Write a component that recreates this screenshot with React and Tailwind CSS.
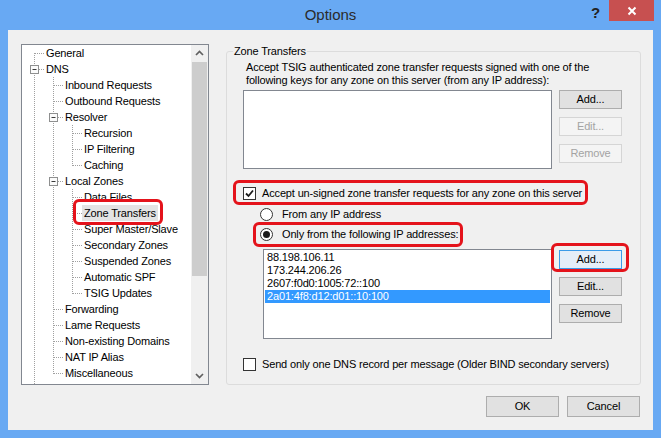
import React from "react";

const tree = [
  { label: "General", guides: [], conn: "F" },
  { label: "DNS", guides: [], conn: "T", box: true },
  { label: "Inbound Requests", guides: ["I"], conn: "T" },
  { label: "Outbound Requests", guides: ["I"], conn: "T" },
  { label: "Resolver", guides: ["I"], conn: "T", box: true },
  { label: "Recursion", guides: ["I", "I"], conn: "T" },
  { label: "IP Filtering", guides: ["I", "I"], conn: "T" },
  { label: "Caching", guides: ["I", "I"], conn: "L" },
  { label: "Local Zones", guides: ["I"], conn: "T", box: true },
  { label: "Data Files", guides: ["I", "I"], conn: "T" },
  { label: "Zone Transfers", guides: ["I", "I"], conn: "T", selected: true },
  { label: "Super Master/Slave", guides: ["I", "I"], conn: "T" },
  { label: "Secondary Zones", guides: ["I", "I"], conn: "T" },
  { label: "Suspended Zones", guides: ["I", "I"], conn: "T" },
  { label: "Automatic SPF", guides: ["I", "I"], conn: "T" },
  { label: "TSIG Updates", guides: ["I", "I"], conn: "L" },
  { label: "Forwarding", guides: ["I"], conn: "T" },
  { label: "Lame Requests", guides: ["I"], conn: "T" },
  { label: "Non-existing Domains", guides: ["I"], conn: "T" },
  { label: "NAT IP Alias", guides: ["I"], conn: "T" },
  { label: "Miscellaneous", guides: ["I"], conn: "L" },
  { label: "", guides: ["I"], conn: null },
];

const addresses = ["88.198.106.11", "173.244.206.26", "2607:f0d0:1005:72::100", "2a01:4f8:d12:d01::10:100"];

function Guide({ kind, box }) {
  const dot = { stroke: "#a0a0a0", strokeWidth: 1, strokeDasharray: "1 1" };
  return (
    <svg width="19" height="16" className="shrink-0">
      {(kind === "I" || kind === "T") && <line x1="9.5" y1="0" x2="9.5" y2="16" {...dot} />}
      {kind === "L" && <line x1="9.5" y1="0" x2="9.5" y2="9" {...dot} />}
      {kind === "F" && <line x1="9.5" y1="8" x2="9.5" y2="16" {...dot} />}
      {(kind === "T" || kind === "L" || kind === "F") && <line x1="10" y1="8.5" x2="19" y2="8.5" {...dot} />}
      {box && (
        <g>
          <rect x="5.5" y="4.5" width="8" height="8" fill="#fbfbfb" stroke="#8e8f8f" />
          <line x1="7.5" y1="8.5" x2="11.5" y2="8.5" stroke="#3a3a3a" />
        </g>
      )}
    </svg>
  );
}

function Btn({ children, disabled, focused, className = "" }) {
  let look = "border-[#adadad] bg-[#e1e1e1] text-black";
  if (disabled) look = "border-[#d5d5d5] bg-[#f4f4f4] text-[#a3a3a3]";
  if (focused) look = "border-[#3c9be8] bg-[#e5eef8] text-black";
  return (
    <div className={`flex items-center justify-center border ${look} ${className}`}>
      {children}
    </div>
  );
}

function RedBox({ className }) {
  return <span className={`pointer-events-none absolute rounded-[6px] border-[3px] border-[#e4131b] ${className}`} />;
}

function CheckBox({ checked }) {
  return (
    <div className="flex h-[13px] w-[13px] shrink-0 items-center justify-center border border-[#333] bg-white">
      {checked && (
        <svg width="11" height="11" viewBox="0 0 11 11">
          <path d="M2 5.5 L4.5 8 L9 2.5" fill="none" stroke="#1a1a1a" strokeWidth="1.8" />
        </svg>
      )}
    </div>
  );
}

function Radio({ checked }) {
  return (
    <div className="flex h-[13px] w-[13px] shrink-0 items-center justify-center rounded-full border border-[#333] bg-white">
      {checked && <div className="h-[7px] w-[7px] rounded-full bg-[#1a1a1a]" />}
    </div>
  );
}

export default function App() {
  return (
    <div className="flex h-[438px] w-[661px] flex-col bg-[#68a9f3] font-['Liberation_Sans',Arial,sans-serif] text-[11px] leading-[13px] tracking-[-0.15px] text-black">
      {/* title bar */}
      <div className="relative flex h-[30px] shrink-0 items-center justify-center">
        <span className="text-[15px] leading-[18px] tracking-normal text-[#2b2b2b]">Options</span>
        <div className="absolute right-[7px] top-0 flex items-start">
          <span className="mr-[9px] mt-[4px] text-[15px] font-bold leading-[18px] text-[#222]">?</span>
          <div className="flex h-[21px] w-[45px] items-center justify-center bg-[#c75050]">
            <svg width="10" height="10" viewBox="0 0 10 10">
              <path d="M1.5 1.5 L8.5 8.5 M8.5 1.5 L1.5 8.5" stroke="white" strokeWidth="2" />
            </svg>
          </div>
        </div>
      </div>

      {/* client */}
      <div className="mx-[8px] flex h-[400px] flex-col bg-[#f0f0f0] pl-[13px] pt-[14px]">
        <div className="flex">
          {/* tree */}
          <div className="flex h-[341px] w-[188px] border border-[#828790] bg-white">
            <div className="flex-1 overflow-hidden pl-[3px]">
              {tree.map((row, i) => (
                <div key={i} className="flex h-[16px] items-center whitespace-nowrap">
                  {row.guides.map((g, j) => (
                    <Guide key={j} kind={g} />
                  ))}
                  {row.conn && <Guide kind={row.conn} box={row.box} />}
                  {row.label && (
                    <span className={`relative px-[2px] leading-[16px] ${row.selected ? "bg-[#e3e3e3]" : ""}`}>
                      {row.label}
                      {row.selected && <RedBox className="-left-[9px] -top-[6px] h-[26px] w-[90px]" />}
                    </span>
                  )}
                </div>
              ))}
            </div>
            <div className="flex w-[17px] flex-col bg-[#f0f0f0]">
              <div className="flex h-[17px] items-center justify-center">
                <svg width="17" height="17" viewBox="0 0 17 17">
                  <path d="M5 10 L8.5 6.5 L12 10" fill="none" stroke="#606060" strokeWidth="1.7" />
                </svg>
              </div>
              <div className="mx-[1px] h-[214px] bg-[#cdcdcd]" />
              <div className="flex-1" />
              <div className="flex h-[17px] items-center justify-center">
                <svg width="17" height="17" viewBox="0 0 17 17">
                  <path d="M5 7 L8.5 10.5 L12 7" fill="none" stroke="#606060" strokeWidth="1.7" />
                </svg>
              </div>
            </div>
          </div>

          {/* group box */}
          <fieldset className="ml-[17px] h-[341px] w-[415px] rounded-[3px] border border-[#dcdcdc] p-0">
            <legend className="ml-[6px] px-[1px] leading-[14px]">Zone Transfers</legend>
            <div className="flex flex-col pl-[16px]">
              <p className="ml-[3px] mt-[3px]">
                Accept TSIG authenticated zone transfer requests signed with one of the
                <br />
                following keys for any zone on this server (from any IP address):
              </p>
              <div className="mt-[3px] flex">
                <div className="h-[79px] w-[309px] border border-[#828790] bg-white" />
                <div className="ml-[7px] flex flex-col gap-[8px]">
                  <Btn className="h-[19px] w-[63px]">Add...</Btn>
                  <Btn className="h-[19px] w-[63px]" disabled>Edit...</Btn>
                  <Btn className="h-[19px] w-[63px]" disabled>Remove</Btn>
                </div>
              </div>

              <div className="relative mt-[18px] flex items-center gap-[6px]">
                <CheckBox checked />
                <span>Accept un-signed zone transfer requests for any zone on this server</span>
                <RedBox className="-left-[10px] -top-[7px] h-[25px] w-[355px]" />
              </div>

              <div className="ml-[17px] mt-[8px] flex items-center gap-[9px]">
                <Radio />
                <span>From any IP address</span>
              </div>
              <div className="relative ml-[17px] mt-[7px] flex items-center gap-[9px]">
                <Radio checked />
                <span>Only from the following IP addresses:</span>
                <RedBox className="-left-[7px] -top-[6px] h-[25px] w-[210px]" />
              </div>

              <div className="ml-[20px] mt-[8px] flex">
                <div className="h-[90px] w-[289px] border border-[#828790] bg-white pt-[1px]">
                  {addresses.map((a, i) => (
                    <div
                      key={a}
                      className={`mx-[1px] px-[2px] ${i === 3 ? "bg-[#3399ff] text-white" : ""}`}
                    >
                      {a}
                    </div>
                  ))}
                </div>
                <div className="ml-[7px] mt-[1px] flex flex-col gap-[8px]">
                  <div className="relative">
                    <Btn className="h-[19px] w-[63px]" focused>Add...</Btn>
                    <RedBox className="-left-[8px] -top-[7px] h-[29px] w-[78px]" />
                  </div>
                  <Btn className="h-[19px] w-[63px]">Edit...</Btn>
                  <Btn className="h-[19px] w-[63px]">Remove</Btn>
                </div>
              </div>

              <div className="mt-[19px] flex items-center gap-[6px]">
                <CheckBox />
                <span>Send only one DNS record per message (Older BIND secondary servers)</span>
              </div>
            </div>
          </fieldset>
        </div>

        <div className="mt-[11px] flex justify-end gap-[8px] pr-[13px]">
          <Btn className="h-[21px] w-[73px]">OK</Btn>
          <Btn className="h-[21px] w-[73px]">Cancel</Btn>
        </div>
      </div>
    </div>
  );
}
